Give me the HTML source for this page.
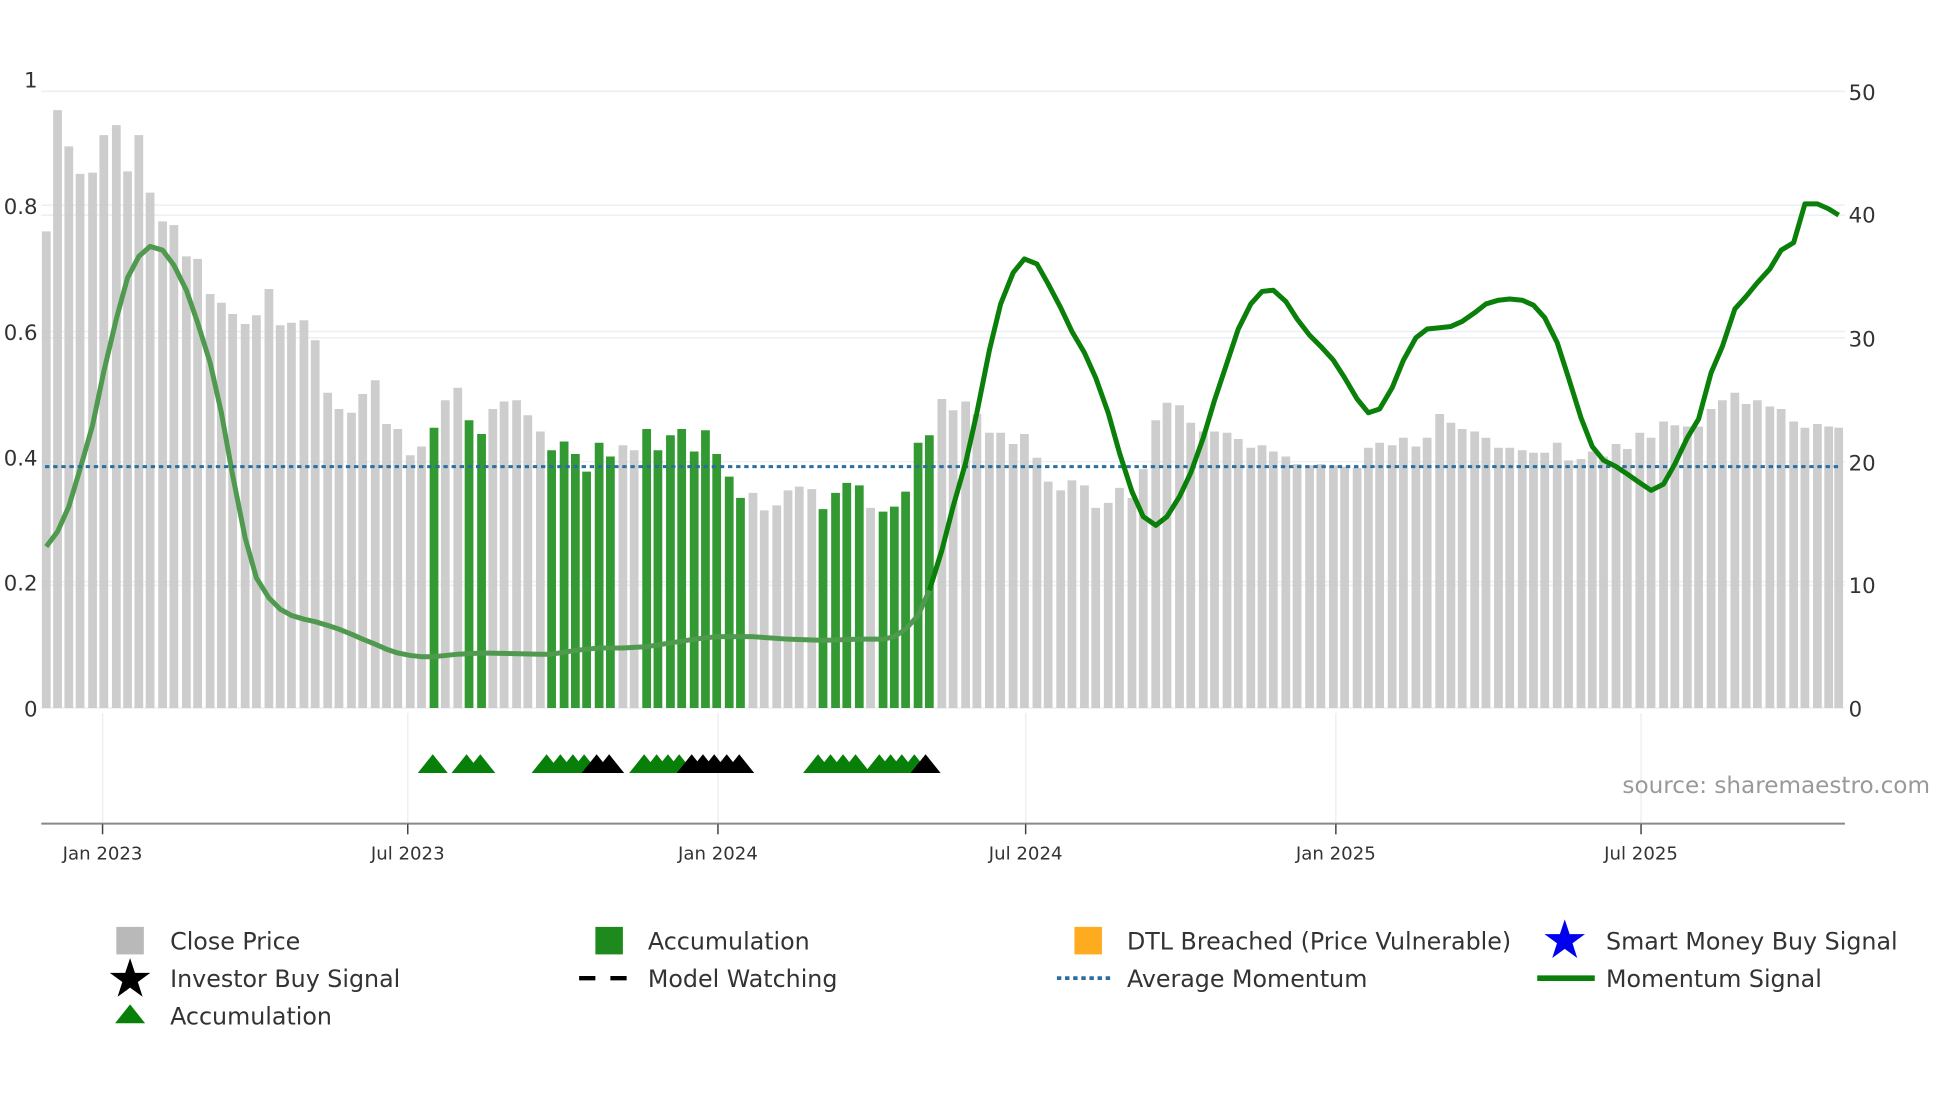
<!DOCTYPE html>
<html><head><meta charset="utf-8"><style>
html,body{margin:0;padding:0;background:#fff;}
svg{display:block;}
text{font-family:"DejaVu Sans","Liberation Sans",sans-serif;}
</style></head><body>
<svg width="1960" height="1102" viewBox="0 0 1567 881" preserveAspectRatio="none" xmlns="http://www.w3.org/2000/svg">
<rect width="1567" height="881" fill="#fff"/>
<!-- gridlines -->
<g stroke="#eceff3" stroke-width="1.2">
<line x1="33" y1="73" x2="1475" y2="73"/>
<line x1="33" y1="164" x2="1475" y2="164"/>
<line x1="33" y1="172" x2="1475" y2="172"/>
<line x1="33" y1="265" x2="1475" y2="265"/>
<line x1="33" y1="270" x2="1475" y2="270"/>
<line x1="33" y1="369" x2="1475" y2="369"/>
<line x1="33" y1="465" x2="1475" y2="465"/>
<line x1="33" y1="468" x2="1475" y2="468"/>
<line x1="33" y1="566" x2="1475" y2="566"/>
<line x1="82" y1="570" x2="82" y2="658"/>
<line x1="326" y1="570" x2="326" y2="658"/>
<line x1="574" y1="570" x2="574" y2="658"/>
<line x1="820" y1="570" x2="820" y2="658"/>
<line x1="1068" y1="570" x2="1068" y2="658"/>
<line x1="1312" y1="570" x2="1312" y2="658"/>
</g>
<!-- axis labels -->
<g font-size="17" fill="#333">
<text x="30" y="70" text-anchor="end">1</text>
<text x="30" y="171" text-anchor="end">0.8</text>
<text x="30" y="272" text-anchor="end">0.6</text>
<text x="30" y="372" text-anchor="end">0.4</text>
<text x="30" y="472" text-anchor="end">0.2</text>
<text x="30" y="573" text-anchor="end">0</text>
<text x="1478" y="80">50</text>
<text x="1478" y="178">40</text>
<text x="1478" y="277">30</text>
<text x="1478" y="376">20</text>
<text x="1478" y="474">10</text>
<text x="1478" y="573">0</text>
</g>
<!-- grey bars -->
<path fill="#c9c9c9" fill-opacity="0.92" d="M33.5 566V185h7V566zM42.5 566V88h7V566zM51.5 566V117h7V566zM60.5 566V139h7V566zM70.5 566V138h7V566zM79.5 566V108h7V566zM89.5 566V100h7V566zM98.5 566V137h7V566zM107.5 566V108h7V566zM116.5 566V154h7V566zM126.5 566V177h7V566zM135.5 566V180h7V566zM145.5 566V205h7V566zM154.5 566V207h7V566zM164.5 566V235h7V566zM173.5 566V242h7V566zM182.5 566V251h7V566zM192.5 566V259h7V566zM201.5 566V252h7V566zM211.5 566V231h7V566zM220.5 566V260h7V566zM229.5 566V258h7V566zM239.5 566V256h7V566zM248.5 566V272h7V566zM258.5 566V314h7V566zM267.5 566V327h7V566zM277.5 566V330h7V566zM286.5 566V315h7V566zM296.5 566V304h7V566zM305.5 566V339h7V566zM314.5 566V343h7V566zM324.5 566V364h7V566zM333.5 566V357h7V566zM352.5 566V320h7V566zM362.5 566V310h7V566zM390.5 566V327h7V566zM399.5 566V321h7V566zM409.5 566V320h7V566zM418.5 566V332h7V566zM428.5 566V345h7V566zM494.5 566V356h7V566zM503.5 566V360h7V566zM598.5 566V394h7V566zM607.5 566V408h7V566zM617.5 566V404h7V566zM626.5 566V392h7V566zM635.5 566V389h7V566zM645.5 566V391h7V566zM692.5 566V406h7V566zM749.5 566V319h7V566zM758.5 566V328h7V566zM768.5 566V321h7V566zM777.5 566V331h7V566zM787.5 566V346h7V566zM796.5 566V346h7V566zM806.5 566V355h7V566zM815.5 566V347h7V566zM825.5 566V366h7V566zM834.5 566V385h7V566zM844.5 566V392h7V566zM853.5 566V384h7V566zM863.5 566V388h7V566zM872.5 566V406h7V566zM882.5 566V402h7V566zM891.5 566V390h7V566zM901.5 566V398h7V566zM910.5 566V375h7V566zM920.5 566V336h7V566zM929.5 566V322h7V566zM939.5 566V324h7V566zM948.5 566V338h7V566zM958.5 566V345h7V566zM967.5 566V345h7V566zM977.5 566V346h7V566zM986.5 566V351h7V566zM996.5 566V358h7V566zM1005.5 566V356h7V566zM1014.5 566V361h7V566zM1024.5 566V365h7V566zM1033.5 566V371h7V566zM1043.5 566V372h7V566zM1052.5 566V371h7V566zM1062.5 566V372h7V566zM1071.5 566V373h7V566zM1081.5 566V374h7V566zM1090.5 566V358h7V566zM1099.5 566V354h7V566zM1109.5 566V356h7V566zM1118.5 566V350h7V566zM1128.5 566V357h7V566zM1137.5 566V350h7V566zM1147.5 566V331h7V566zM1156.5 566V338h7V566zM1165.5 566V343h7V566zM1175.5 566V345h7V566zM1184.5 566V350h7V566zM1194.5 566V358h7V566zM1203.5 566V358h7V566zM1213.5 566V360h7V566zM1222.5 566V362h7V566zM1231.5 566V362h7V566zM1241.5 566V354h7V566zM1250.5 566V368h7V566zM1260.5 566V367h7V566zM1269.5 566V361h7V566zM1278.5 566V365h7V566zM1288.5 566V355h7V566zM1297.5 566V359h7V566zM1307.5 566V346h7V566zM1316.5 566V350h7V566zM1326.5 566V337h7V566zM1335.5 566V340h7V566zM1345.5 566V341h7V566zM1354.5 566V341h7V566zM1364.5 566V327h7V566zM1373.5 566V320h7V566zM1383.5 566V314h7V566zM1392.5 566V323h7V566zM1401.5 566V320h7V566zM1411.5 566V325h7V566zM1420.5 566V327h7V566zM1430.5 566V337h7V566zM1439.5 566V342h7V566zM1449.5 566V339h7V566zM1458.5 566V341h7V566zM1466.5 566V342h7V566z"/>
<!-- green bars -->
<path fill="#339933" d="M343.5 566V342h7V566zM371.5 566V336h7V566zM381.5 566V347h7V566zM437.5 566V360h7V566zM447.5 566V353h7V566zM456.5 566V363h7V566zM465.5 566V377h7V566zM475.5 566V354h7V566zM484.5 566V365h7V566zM513.5 566V343h7V566zM522.5 566V360h7V566zM532.5 566V348h7V566zM541.5 566V343h7V566zM551.5 566V361h7V566zM560.5 566V344h7V566zM569.5 566V363h7V566zM579.5 566V381h7V566zM588.5 566V398h7V566zM654.5 566V407h7V566zM664.5 566V394h7V566zM673.5 566V386h7V566zM683.5 566V388h7V566zM702.5 566V409h7V566zM711.5 566V405h7V566zM720.5 566V393h7V566zM730.5 566V354h7V566zM739.5 566V348h7V566z"/>
<!-- momentum line left part -->
<path d="M37 437L46 425L55 405L64 375L74 340L83 297L93 255L102 222L111 205L120 197L130 200L139 212L149 232L158 258L168 290L177 330L186 380L196 430L205 462L215 478L224 487L233 492L243 495L252 497L262 500L271 503L281 507L290 511L300 515L309 519L318 522L328 524L337 525L347 525L366 523L385 522L432 523L441 523L460 520L479 518L498 518L517 517L536 514L555 511L573 509L602 509L630 511L658 512L687 511L706 511L715 509L724 503L734 492L743 472L753 440" fill="none" stroke="#4f9a4f" stroke-width="4" stroke-linejoin="round"/>
<!-- average momentum -->
<line x1="36" y1="373" x2="1472" y2="373" stroke="#2b6ea0" stroke-width="2.4" stroke-dasharray="3.5 3"/>
<!-- momentum line right part -->
<path d="M743 472L753 440L762 405L772 370L781 330L791 280L800 243L810 218L819 207L829 211L838 227L848 246L857 265L867 282L876 302L886 330L895 362L905 393L914 413L924 420L933 413L943 397L952 378L962 350L971 320L981 290L990 263L1000 243L1009 233L1018 232L1028 241L1037 255L1047 268L1056 277L1066 288L1075 302L1085 319L1094 330L1103 327L1113 310L1122 288L1132 270L1141 263L1151 262L1160 261L1169 257L1179 250L1188 243L1198 240L1207 239L1217 240L1226 244L1235 254L1245 274L1254 302L1264 334L1273 357L1282 368L1292 373L1301 379L1311 386L1320 392L1330 387L1339 371L1349 350L1358 335L1368 298L1377 277L1387 247L1396 237L1405 226L1415 215L1424 200L1434 194L1443 163L1453 163L1462 167L1470 172" fill="none" stroke="#0a800a" stroke-width="4" stroke-linejoin="round"/>
<!-- triangles -->
<g fill="#087f08">
<path d="M334 618l12-15 12 15z"/><path d="M361 618l12-15 12 15z"/><path d="M372 618l12-15 12 15z"/>
<path d="M425 618l12-15 12 15z"/><path d="M436 618l12-15 12 15z"/><path d="M446 618l12-15 12 15z"/><path d="M455 618l12-15 12 15z"/>
<path d="M503 618l12-15 12 15z"/><path d="M513 618l12-15 12 15z"/><path d="M522 618l12-15 12 15z"/><path d="M531 618l12-15 12 15z"/>
<path d="M642 618l12-15 12 15z"/><path d="M652 618l12-15 12 15z"/><path d="M662 618l12-15 12 15z"/><path d="M672 618l12-15 12 15z"/>
<path d="M691 618l12-15 12 15z"/><path d="M700 618l12-15 12 15z"/><path d="M709 618l12-15 12 15z"/><path d="M719 618l12-15 12 15z"/>
</g>
<g fill="#000">
<path d="M465 618l12-15 12 15z"/><path d="M475 618l12-15 12 15z"/>
<path d="M541 618l12-15 12 15z"/><path d="M550 618l12-15 12 15z"/><path d="M559 618l12-15 12 15z"/><path d="M569 618l12-15 12 15z"/><path d="M579 618l12-15 12 15z"/>
<path d="M728 618l12-15 12 15z"/>
</g>
<!-- x axis -->
<line x1="33" y1="658.5" x2="1475" y2="658.5" stroke="#888" stroke-width="1.6"/>
<g stroke="#444" stroke-width="1.2">
<line x1="82" y1="659" x2="82" y2="667"/><line x1="326" y1="659" x2="326" y2="667"/><line x1="574" y1="659" x2="574" y2="667"/><line x1="820" y1="659" x2="820" y2="667"/><line x1="1068" y1="659" x2="1068" y2="667"/><line x1="1312" y1="659" x2="1312" y2="667"/>
</g>
<g font-size="14.5" fill="#333" text-anchor="middle">
<text x="82" y="687">Jan 2023</text><text x="326" y="687">Jul 2023</text><text x="574" y="687">Jan 2024</text><text x="820" y="687">Jul 2024</text><text x="1068" y="687">Jan 2025</text><text x="1312" y="687">Jul 2025</text>
</g>
<text x="1543" y="634" font-size="18.5" fill="#999" text-anchor="end">source: sharemaestro.com</text>
<!-- legend -->
<rect x="93" y="741" width="22" height="22" fill="#b9b9b9"/>
<rect x="476" y="741" width="22" height="22" fill="#1e8a1e"/>
<rect x="859" y="741" width="22" height="22" fill="#ffab20"/>
<path d="M1251 735l3.9 11.8h12.3l-10 7.3 3.8 11.8-10-7.3-10 7.3 3.8-11.8-10-7.3h12.3z" fill="#0000ee"/>
<path d="M104 766l3.9 11.8h12.3l-10 7.3 3.8 11.8-10-7.3-10 7.3 3.8-11.8-10-7.3h12.3z" fill="#000"/>
<line x1="463" y1="782" x2="505" y2="782" stroke="#000" stroke-width="3.5" stroke-dasharray="13 12"/>
<line x1="845" y1="782" x2="889" y2="782" stroke="#2b6ea0" stroke-width="3" stroke-dasharray="3.5 3"/>
<line x1="1229" y1="782" x2="1275" y2="782" stroke="#0a800a" stroke-width="4.5"/>
<path d="M92 818l12-15 12 15z" fill="#087f08"/>
<g font-size="19" fill="#333">
<text x="136" y="759">Close Price</text>
<text x="518" y="759">Accumulation</text>
<text x="901" y="759">DTL Breached (Price Vulnerable)</text>
<text x="1284" y="759">Smart Money Buy Signal</text>
<text x="136" y="789">Investor Buy Signal</text>
<text x="518" y="789">Model Watching</text>
<text x="901" y="789">Average Momentum</text>
<text x="1284" y="789">Momentum Signal</text>
<text x="136" y="819">Accumulation</text>
</g>
</svg>
</body></html>
